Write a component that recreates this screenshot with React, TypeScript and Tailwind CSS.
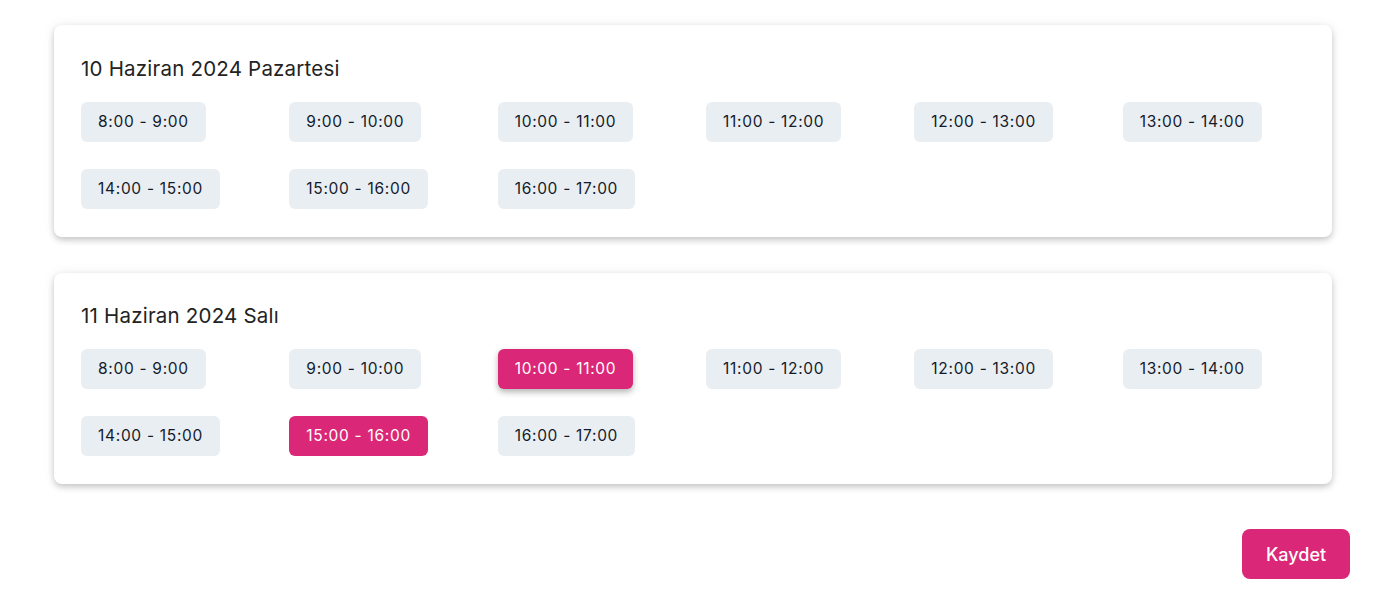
import { useState } from "react";

type Day = { key: string; title: string; selected: string[]; tight?: boolean };

const SLOTS = [
  "8:00 - 9:00",
  "9:00 - 10:00",
  "10:00 - 11:00",
  "11:00 - 12:00",
  "12:00 - 13:00",
  "13:00 - 14:00",
  "14:00 - 15:00",
  "15:00 - 16:00",
  "16:00 - 17:00",
];

const DAYS: Day[] = [
  { key: "2024-06-10", title: "10 Haziran 2024 Pazartesi", selected: [] },
  { key: "2024-06-11", title: "11 Haziran 2024 Salı", selected: ["10:00 - 11:00", "15:00 - 16:00"], tight: true },
];

const FONT = "font-['Inter','Noto_Sans',sans-serif]";

function SlotChip({ label, active, raised, onClick }: { label: string; active: boolean; raised?: boolean; onClick: () => void }) {
  return (
    <div>
      <button
        type="button"
        onClick={onClick}
        className={
          "h-10 rounded-md px-[17px] text-[15.5px] tracking-[0.045em] " +
          (active
            ? "bg-[#db2777] text-white " + (raised ? "shadow-[0_3px_6px_rgba(0,0,0,0.3)]" : "")
            : "bg-[#e9eef3] text-[#141a2a]")
        }
      >
        {label}
      </button>
    </div>
  );
}

function DayCard({ day }: { day: Day }) {
  const [picked, setPicked] = useState<string[]>(day.selected);
  const toggle = (s: string) =>
    setPicked((p) => (p.includes(s) ? p.filter((x) => x !== s) : [...p, s]));

  return (
    <div
      className={
        "rounded-lg bg-white px-[27px] pb-[28px] shadow-[0_3px_6px_rgba(0,0,0,0.2),0_0_14px_rgba(0,0,0,0.06)] " +
        (day.tight ? "pt-[27px]" : "pt-[28px]")
      }
    >
      <h3 className="text-[20.5px] leading-8 tracking-[0.01em] text-[#232323]">{day.title}</h3>
      <div className="mt-[17px] grid grid-cols-6 gap-x-[26px] gap-y-[27px]">
        {SLOTS.map((s) => (
          <SlotChip
            key={s}
            label={s}
            active={picked.includes(s)}
            raised={s === "10:00 - 11:00"}
            onClick={() => toggle(s)}
          />
        ))}
      </div>
    </div>
  );
}

export default function App() {
  return (
    <div className={`${FONT} h-[608px] overflow-hidden bg-white`}>
      <div className="pl-[54px] pr-[30px]">
        <div className="w-[1278px]">
          <div className="-mt-[120px] mb-[36px] h-[109px] rounded-lg bg-white shadow-[0_3px_6px_rgba(0,0,0,0.2),0_0_14px_rgba(0,0,0,0.06)]" />
          <div className="flex flex-col gap-[36px]">
            {DAYS.map((d) => (
              <DayCard key={d.key} day={d} />
            ))}
          </div>
        </div>
        <div className="mt-[45px] flex justify-end">
          <button
            type="button"
            className="h-[50px] w-[108px] rounded-lg bg-[#db2777] text-[18px] font-medium text-white"
          >
            Kaydet
          </button>
        </div>
      </div>
    </div>
  );
}
